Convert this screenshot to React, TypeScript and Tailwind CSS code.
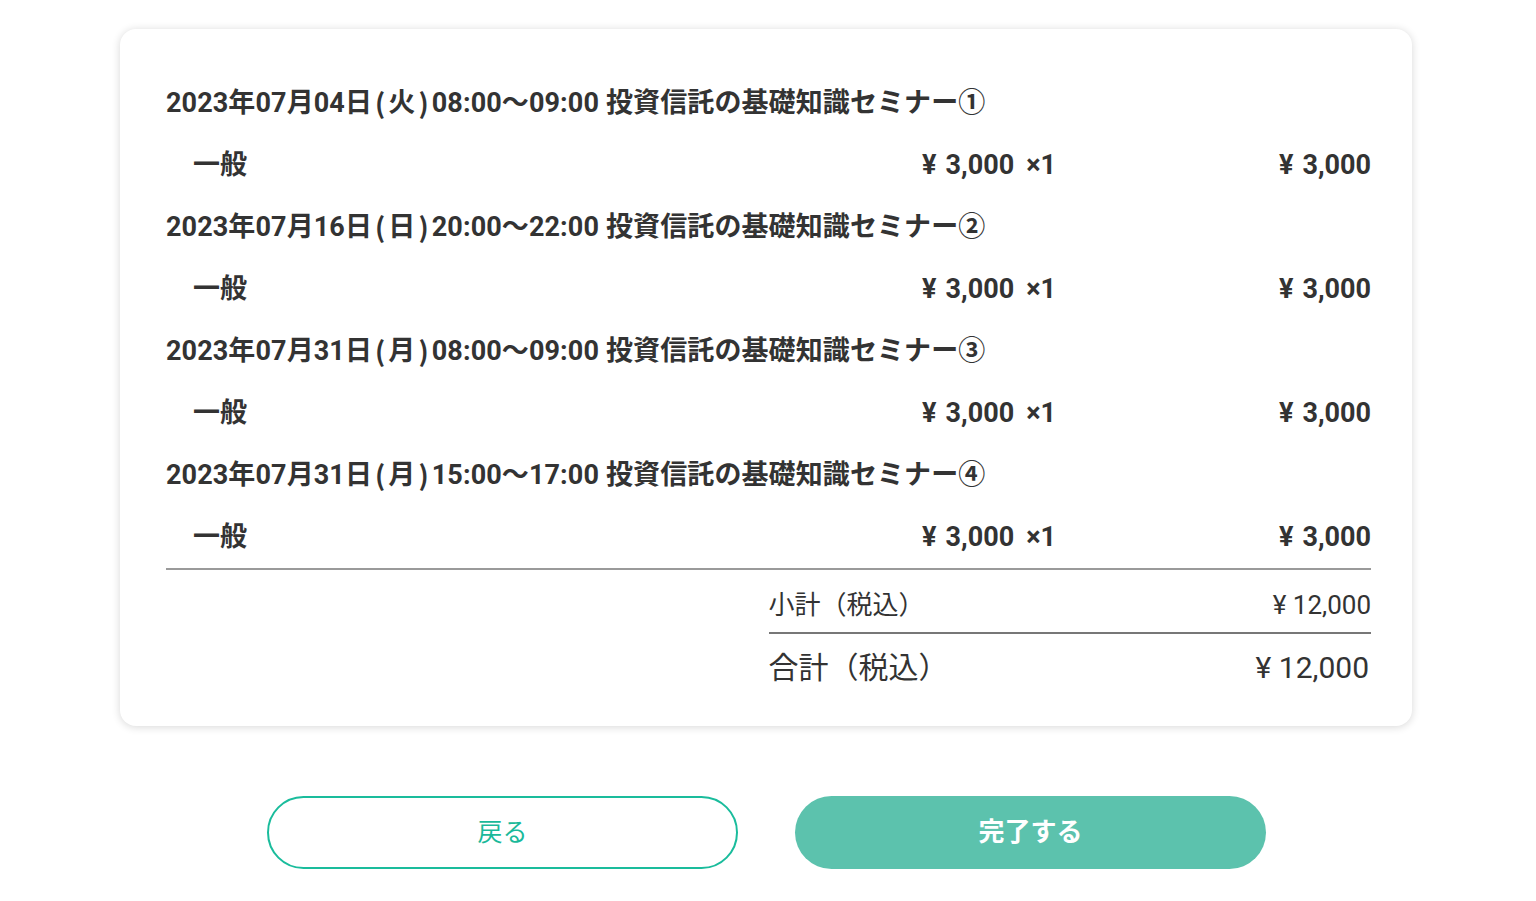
import React from "react";

type Seminar = {
  id: number;
  date: string;
  day: string;
  time: string;
  name: string;
  ticket: string;
  price: string;
  qty: number;
  amount: string;
};

const seminars: Seminar[] = [
  { id: 1, date: "2023年07月04日", day: "火", time: "08:00〜09:00", name: "投資信託の基礎知識セミナー①", ticket: "一般", price: "3,000", qty: 1, amount: "3,000" },
  { id: 2, date: "2023年07月16日", day: "日", time: "20:00〜22:00", name: "投資信託の基礎知識セミナー②", ticket: "一般", price: "3,000", qty: 1, amount: "3,000" },
  { id: 3, date: "2023年07月31日", day: "月", time: "08:00〜09:00", name: "投資信託の基礎知識セミナー③", ticket: "一般", price: "3,000", qty: 1, amount: "3,000" },
  { id: 4, date: "2023年07月31日", day: "月", time: "15:00〜17:00", name: "投資信託の基礎知識セミナー④", ticket: "一般", price: "3,000", qty: 1, amount: "3,000" },
];

export default function App() {
  return (
    <div
      className="min-h-screen bg-white text-[#333333]"
      style={{ fontFamily: "Roboto, 'Noto Sans CJK JP', sans-serif" }}
    >
      <div className="pt-[29px] pl-[120px] pr-[124px]">
        <div className="rounded-2xl bg-white shadow-[0_1px_9px_rgba(0,0,0,0.16)] pt-[42px] pb-[26px] pl-[46px] pr-[41px]">
          <div className="border-b-2 border-[#9a9a9a] pb-[1px]">
            {seminars.map((s) => (
              <div key={s.id}>
                <div className="h-[64px] flex items-center text-[27px] font-bold tracking-[0.1px] whitespace-nowrap">
                  <span>{s.date}</span>
                  <span className="mx-[3px] font-['Noto_Sans_CJK_JP']">(</span>
                  <span>{s.day}</span>
                  <span className="mx-[3px] font-['Noto_Sans_CJK_JP']">)</span>
                  <span>{s.time}</span>
                  <span className="ml-[7px]">{s.name}</span>
                </div>
                <div className="h-[60px] flex items-center text-[27px] font-bold">
                  <p className="pl-[27px] flex-1">{s.ticket}</p>
                  <p className="w-[226px] text-right">
                    <span className="mr-[9px]">¥</span>
                    {s.price}
                    <span className="ml-[12px]">×{s.qty}</span>
                  </p>
                  <p className="w-[315px] text-right">
                    <span className="mr-[9px]">¥</span>
                    {s.amount}
                  </p>
                </div>
              </div>
            ))}
          </div>
          <div className="ml-auto w-1/2">
            <div className="h-[64px] pt-[9px] flex items-center justify-between border-b-2 border-[#777777] text-[26px]">
              <p>小計（税込）</p>
              <p>¥ 12,000</p>
            </div>
            <div className="h-[66px] flex items-center justify-between text-[30px]">
              <p>合計（税込）</p>
              <p className="pr-[2px]">¥ 12,000</p>
            </div>
          </div>
        </div>
      </div>
      <div className="mt-[70px] flex justify-center gap-[57px] pr-[3px]">
        <button className="w-[471px] h-[73px] rounded-full border-2 border-[#1abc9c] bg-white text-[#1ab99a] text-[25px]">
          戻る
        </button>
        <button className="w-[471px] h-[73px] rounded-full bg-[#5cc2ad] text-white text-[26px] font-bold">
          完了する
        </button>
      </div>
    </div>
  );
}
